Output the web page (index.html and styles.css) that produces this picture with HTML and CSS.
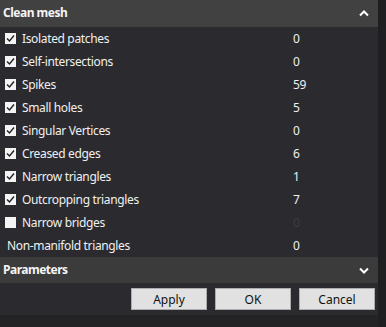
FILE: index.html
```html
<!DOCTYPE html>
<html>
<head>
<meta charset="utf-8">
<link rel="stylesheet" href="styles.css">
</head>
<body>
<div class="frame">
  <div class="panel">
    <div class="section-head">
      <span>Clean mesh</span>
      <svg class="chev" width="10" height="7" viewBox="0 0 10 7"><path d="M1 5.5 L5 1.5 L9 5.5" fill="none" stroke="#fff" stroke-width="2"/></svg>
    </div>
    <div class="list">
      <div class="row"><span class="cb on"><svg width="11" height="11" viewBox="0 0 11 11"><path d="M2 5.5 L4.5 8 L9 2.5" fill="none" stroke="#222" stroke-width="1.4"/></svg></span><span class="label">Isolated patches</span><span class="val">0</span></div>
      <div class="row"><span class="cb on"><svg width="11" height="11" viewBox="0 0 11 11"><path d="M2 5.5 L4.5 8 L9 2.5" fill="none" stroke="#222" stroke-width="1.4"/></svg></span><span class="label">Self-intersections</span><span class="val">0</span></div>
      <div class="row"><span class="cb on"><svg width="11" height="11" viewBox="0 0 11 11"><path d="M2 5.5 L4.5 8 L9 2.5" fill="none" stroke="#222" stroke-width="1.4"/></svg></span><span class="label">Spikes</span><span class="val">59</span></div>
      <div class="row"><span class="cb on"><svg width="11" height="11" viewBox="0 0 11 11"><path d="M2 5.5 L4.5 8 L9 2.5" fill="none" stroke="#222" stroke-width="1.4"/></svg></span><span class="label">Small holes</span><span class="val">5</span></div>
      <div class="row"><span class="cb on"><svg width="11" height="11" viewBox="0 0 11 11"><path d="M2 5.5 L4.5 8 L9 2.5" fill="none" stroke="#222" stroke-width="1.4"/></svg></span><span class="label">Singular Vertices</span><span class="val">0</span></div>
      <div class="row"><span class="cb on"><svg width="11" height="11" viewBox="0 0 11 11"><path d="M2 5.5 L4.5 8 L9 2.5" fill="none" stroke="#222" stroke-width="1.4"/></svg></span><span class="label">Creased edges</span><span class="val">6</span></div>
      <div class="row"><span class="cb on"><svg width="11" height="11" viewBox="0 0 11 11"><path d="M2 5.5 L4.5 8 L9 2.5" fill="none" stroke="#222" stroke-width="1.4"/></svg></span><span class="label">Narrow triangles</span><span class="val">1</span></div>
      <div class="row"><span class="cb on"><svg width="11" height="11" viewBox="0 0 11 11"><path d="M2 5.5 L4.5 8 L9 2.5" fill="none" stroke="#222" stroke-width="1.4"/></svg></span><span class="label">Outcropping triangles</span><span class="val">7</span></div>
      <div class="row"><span class="cb"></span><span class="label">Narrow bridges</span><span class="val dim">0</span></div>
      <div class="row plain"><span class="label">Non-manifold triangles</span><span class="val">0</span></div>
    </div>
    <div class="section-head params">
      <span>Parameters</span>
      <svg class="chev" width="10" height="7" viewBox="0 0 10 7"><path d="M1 1.5 L5 5.5 L9 1.5" fill="none" stroke="#fff" stroke-width="2"/></svg>
    </div>
    <div class="buttons">
      <button class="btn">Apply</button>
      <button class="btn">OK</button>
      <button class="btn">Cancel</button>
    </div>
  </div>
  <div class="strip"></div>
</div>
</body>
</html>
```
FILE: styles.css
```css
html, body {
  margin: 0;
  padding: 0;
  background: #232325;
  width: 386px;
  height: 327px;
  overflow: hidden;
  font-family: "Noto Sans", "Open Sans", sans-serif;
  font-size: 12px;
  letter-spacing: -0.35px;
  color: #f0f0f0;
}
.frame {
  display: flex;
  height: 327px;
}
.panel {
  width: 378px;
  display: flex;
  flex-direction: column;
}
.strip {
  flex: 1;
  background: #1f1f21;
}
.section-head {
  height: 27px;
  background: #414141;
  display: flex;
  align-items: center;
  justify-content: space-between;
  padding: 0 9px 0 3px;
  font-weight: bold;
  font-size: 12px;
  letter-spacing: -0.5px;
  color: #f4f4f4;
}
.section-head span { position: relative; top: -1px; }
.list {
  background: #2b2b2f;
  height: 230px;
  box-sizing: border-box;
}
.row {
  height: 23px;
  display: flex;
  align-items: center;
  position: relative;
}
.cb {
  width: 11px;
  height: 11px;
  margin-left: 5px;
  margin-right: 6px;
  background: #f4f4f4;
  display: flex;
}
.label { flex: 0 0 auto; }
.row.plain .label { margin-left: 7px; }
.val {
  position: absolute;
  left: 293px;
}
.val.dim { color: #3c3c40; }
.params {
  height: 26px;
  background: #3b3b3b;
}
.buttons {
  background: #2b2b2f;
  display: flex;
  justify-content: flex-end;
  gap: 8px;
  padding: 5px 3px 5px 0;
  border-bottom: 12px solid #232325;
}
.btn {
  width: 76px;
  height: 22px;
  background: #e1e1e1;
  border: 1px solid #adadad;
  font-family: "Noto Sans", "Open Sans", sans-serif;
  font-size: 12px;
  color: #111;
  padding: 0;
}
```
